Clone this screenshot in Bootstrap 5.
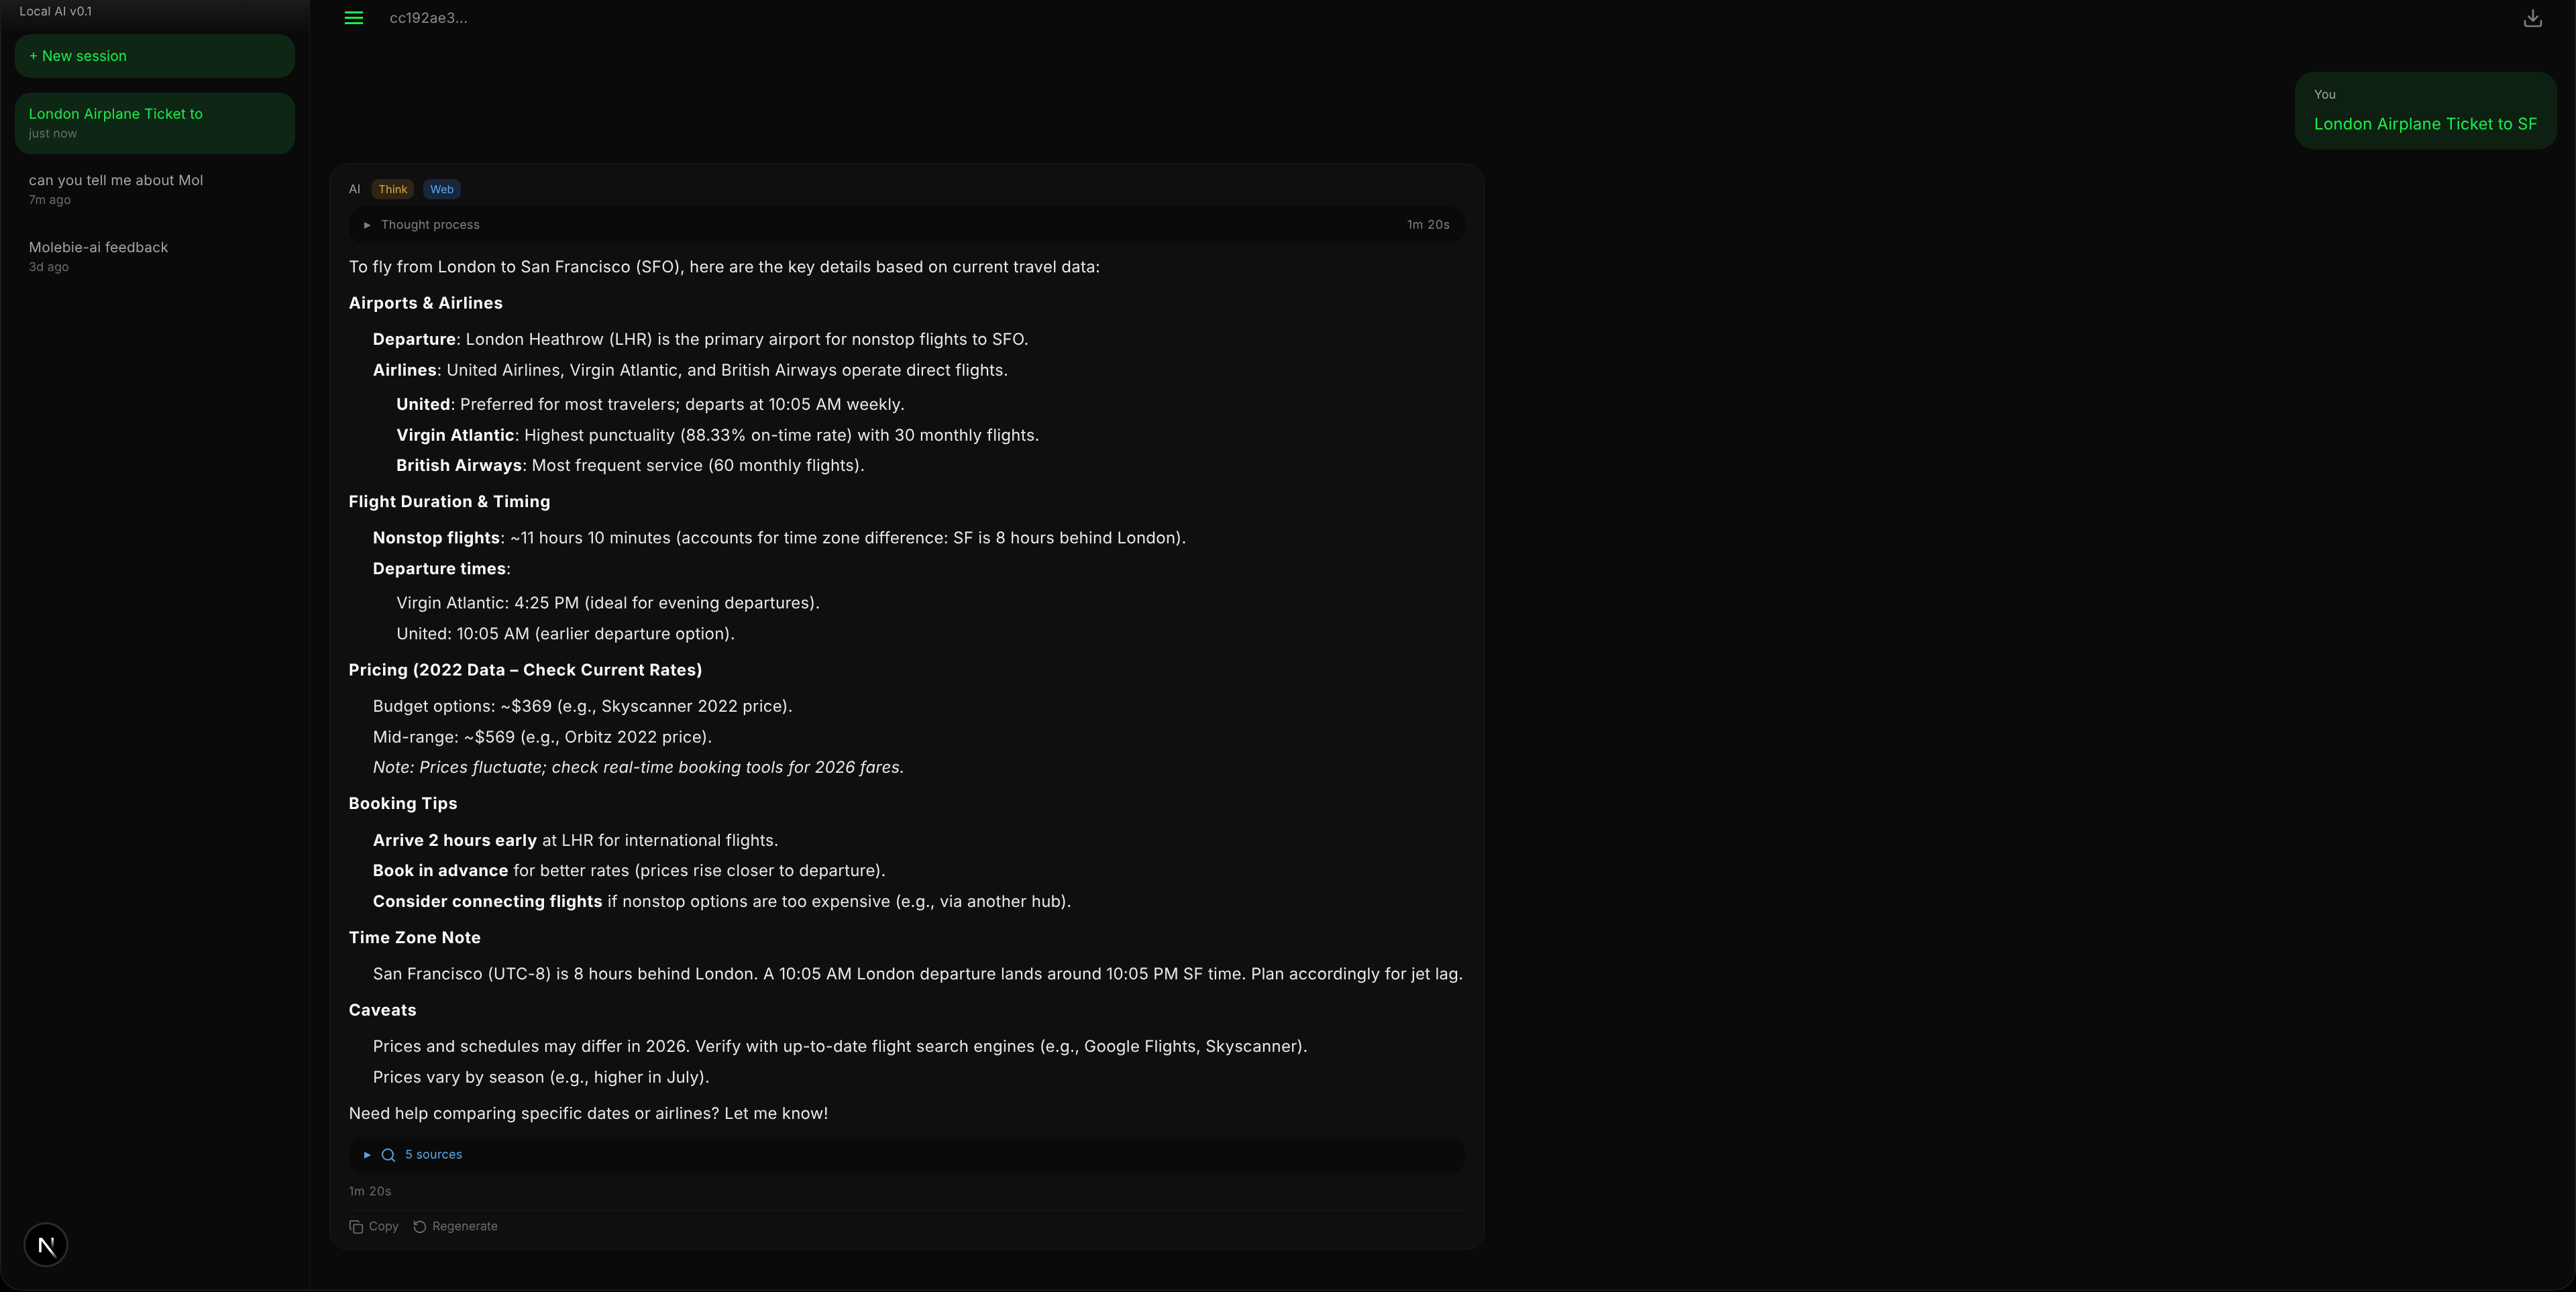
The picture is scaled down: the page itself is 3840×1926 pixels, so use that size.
<!DOCTYPE html>
<html lang="en">
<head>
    <meta charset="UTF-8">
    <meta name="viewport" content="width=device-width, initial-scale=1.0">
    <title>Local AI</title>
    <link href="https://cdn.jsdelivr.net/npm/bootstrap@5.3.0/dist/css/bootstrap.min.css" rel="stylesheet">
    <style>
    html, body { height: 100%; background: #000; }
    body { font-family: Inter, "Liberation Sans", sans-serif; text-rendering: geometricPrecision; overflow: hidden; }

    .app-window {
        height: 1924px;
        background: #0a0a0a;
        border: 2px solid #1a1a1a;
        border-top: 0;
        border-radius: 0 0 32px 32px;
        overflow: hidden;
        will-change: transform; /* grayscale text, same as the reference */
    }

    /* Sidebar */
    .side-panel {
        width: 460px;
        flex: none;
        border-right: 1px solid #1a1a1a;
        background: linear-gradient(#1b1b1b, #0a0a0a 50px);
        padding: 6px 21px 0 20px;
    }
    .app-version { font-size: 18px; line-height: 24px; letter-spacing: .2px; color: #a3a3a3; padding-left: 7px; margin-bottom: 21px; }
    .new-btn {
        height: 65px;
        width: 100%;
        border: 0;
        border-radius: 24px;
        background: #0e2614;
        color: #1aef4c;
        font-size: 21px;
        text-align: left;
        padding: 0 21px;
        margin-bottom: 22px;
    }
    .session-item { padding: 25px 21px 0; height: 99.5px; border-radius: 24px; }
    .session-item.is-active { background: #0e2614; height: 92px; padding-top: 18px; }
    .session-title { font-size: 21px; line-height: 30px; letter-spacing: .2px; color: #a3a3a3; white-space: nowrap; }
    .is-active .session-title { color: #1aef4c; }
    .session-time { font-size: 18px; line-height: 28px; letter-spacing: .15px; color: #6b6b6b; }

    .dev-badge {
        position: absolute;
        left: 33px;
        bottom: 33px;
        width: 67px;
        height: 67px;
        border-radius: 50%;
        background: #000;
        border: 3px solid #2a2a2a;
    }

    /* Top bar */
    .top-bar { height: 53px; padding: 0 46px 0 52px; }
    .menu-lines { width: 27px; height: 19px; border-top: 3px solid #1aef4c; border-bottom: 3px solid #1aef4c; position: relative; margin-right: 40px; }
    .menu-lines::after { content: ""; position: absolute; left: 0; right: 0; top: 5px; height: 3px; background: #1aef4c; }
    .session-id { font-size: 21px; letter-spacing: .4px; color: #8a8a8a; margin-top: 2px; }

    /* Chat */
    .chat-area { padding: 54px 26px 0 29px; }
    .user-bubble {
        background: #0d2012;
        border-radius: 28px;
        padding: 22px 29px 0;
        height: 116px;
        margin-bottom: 21px;
    }
    .bubble-label { font-size: 18px; line-height: 26px; color: #a3a3a3; }
    .bubble-text { font-size: 24px; line-height: 38px; letter-spacing: .2px; color: #1aef4c; margin-top: 11px; }

    .ai-card {
        width: 1722px;
        background: #0f0f0f;
        border: 1px solid #1c1c1c;
        border-radius: 28px;
        padding: 22px 28px 20px 28px;
    }
    .ai-label { font-size: 18px; color: #a3a3a3; margin-right: 17px; }
    .mode-chip { font-size: 16.5px; line-height: 30px; padding: 0 10px; border-radius: 10px; margin-right: 14px; }
    .chip-think { background: #2e2517; color: #e0ab3a; }
    .chip-web { background: #17263b; color: #5aa5ea; }
    .chip-row { margin-bottom: 11px; }
    .fold-bar {
        height: 55px;
        background: #0a0a0a;
        border-radius: 22px;
        padding: 0 22px 0 23px;
        font-size: 18px;
        letter-spacing: .2px;
        color: #808080;
    }
    .fold-arrow { width: 0; height: 0; border-left: 10px solid #808080; border-top: 5px solid transparent; border-bottom: 5px solid transparent; margin-right: 15px; }
    .elapsed { letter-spacing: .7px; }
    .answer-body { font-size: 24px; line-height: 36px; letter-spacing: .27px; color: #e8e8e8; margin-top: 17px; }
    .answer-body p { margin: 0 0 18.1px; }
    .answer-body p:last-child { margin-bottom: 16.7px; }
    .answer-body ul { list-style: none; margin: 0; padding-left: 36px; }
    .answer-body ul ul { padding-left: 35px; }
    .answer-body > ul { margin-bottom: 18.1px; }
    .answer-body li + li { margin-top: 9.7px; }
    .answer-body li > ul { padding-top: 15px; }
    .answer-body b { color: #f8f8f8; font-weight: 700; letter-spacing: .65px; }
    .answer-body .answer-head { color: #f8f8f8; font-weight: 700; letter-spacing: .85px; }
    .sources-bar { color: #5aa5ea; height: 54px; }
    .sources-bar .fold-arrow { border-left-color: #5aa5ea; margin-right: 14px; }
    .search-glyph { margin-right: 13px; }
    .run-time { font-size: 18px; color: #6b6b6b; line-height: 26px; margin-top: 15px; }
    .action-row { border-top: 1px solid #1c1c1c; margin-top: 14px; padding-top: 11px; font-size: 18px; line-height: 26px; color: #6b6b6b; }
    .action-row svg { margin-right: 8px; }
    .action-gap { margin-right: 20px; }
    </style>
</head>
<body>
    <div class="app-window d-flex position-relative">
        <aside class="side-panel">
            <div class="app-version">Local AI v0.1</div>
            <button class="new-btn">+ New session</button>
            <div class="session-item is-active">
                <div class="session-title">London Airplane Ticket to</div>
                <div class="session-time">just now</div>
            </div>
            <div class="session-item">
                <div class="session-title">can you tell me about Mol</div>
                <div class="session-time">7m ago</div>
            </div>
            <div class="session-item">
                <div class="session-title">Molebie-ai feedback</div>
                <div class="session-time">3d ago</div>
            </div>
        </aside>

        <main class="flex-grow-1">
            <div class="top-bar d-flex align-items-center">
                <div class="menu-lines"></div>
                <span class="session-id">cc192ae3...</span>
                <svg class="ms-auto" width="32" height="32" viewBox="0 0 24 24" fill="none" stroke="#808080" stroke-width="2" stroke-linecap="round" stroke-linejoin="round"><path d="M3 15v4a2 2 0 0 0 2 2h14a2 2 0 0 0 2-2v-4"/><path d="M7 10l5 5 5-5"/><path d="M12 15V3"/></svg>
            </div>

            <div class="chat-area">
                <div class="d-flex justify-content-end">
                    <div class="user-bubble">
                        <div class="bubble-label">You</div>
                        <div class="bubble-text">London Airplane Ticket to SF</div>
                    </div>
                </div>

                <div class="ai-card">
                    <div class="d-flex align-items-center chip-row">
                        <span class="ai-label">AI</span>
                        <span class="mode-chip chip-think">Think</span>
                        <span class="mode-chip chip-web">Web</span>
                    </div>
                    <div class="fold-bar d-flex align-items-center">
                        <span class="fold-arrow"></span>
                        <span>Thought process</span>
                        <span class="ms-auto elapsed">1m 20s</span>
                    </div>

                    <div class="answer-body">
                        <p>To fly from London to San Francisco (SFO), here are the key details based on current travel data:</p>
                        <p class="answer-head">Airports &amp; Airlines</p>
                        <ul>
                            <li><b>Departure</b>: London Heathrow (LHR) is the primary airport for nonstop flights to SFO.</li>
                            <li><b>Airlines</b>: United Airlines, Virgin Atlantic, and British Airways operate direct flights.
                                <ul>
                                    <li><b>United</b>: Preferred for most travelers; departs at 10:05 AM weekly.</li>
                                    <li><b>Virgin Atlantic</b>: Highest punctuality (88.33% on-time rate) with 30 monthly flights.</li>
                                    <li><b>British Airways</b>: Most frequent service (60 monthly flights).</li>
                                </ul>
                            </li>
                        </ul>
                        <p class="answer-head">Flight Duration &amp; Timing</p>
                        <ul>
                            <li><b>Nonstop flights</b>: ~11 hours 10 minutes (accounts for time zone difference: SF is 8 hours behind London).</li>
                            <li><b>Departure times</b>:
                                <ul>
                                    <li>Virgin Atlantic: 4:25 PM (ideal for evening departures).</li>
                                    <li>United: 10:05 AM (earlier departure option).</li>
                                </ul>
                            </li>
                        </ul>
                        <p class="answer-head">Pricing (2022 Data – Check Current Rates)</p>
                        <ul>
                            <li>Budget options: ~$369 (e.g., Skyscanner 2022 price).</li>
                            <li>Mid-range: ~$569 (e.g., Orbitz 2022 price).</li>
                            <li><em>Note: Prices fluctuate; check real-time booking tools for 2026 fares.</em></li>
                        </ul>
                        <p class="answer-head">Booking Tips</p>
                        <ul>
                            <li><b>Arrive 2 hours early</b> at LHR for international flights.</li>
                            <li><b>Book in advance</b> for better rates (prices rise closer to departure).</li>
                            <li><b>Consider connecting flights</b> if nonstop options are too expensive (e.g., via another hub).</li>
                        </ul>
                        <p class="answer-head">Time Zone Note</p>
                        <ul>
                            <li>San Francisco (UTC-8) is 8 hours behind London. A 10:05 AM London departure lands around 10:05 PM SF time. Plan accordingly for jet lag.</li>
                        </ul>
                        <p class="answer-head">Caveats</p>
                        <ul>
                            <li>Prices and schedules may differ in 2026. Verify with up-to-date flight search engines (e.g., Google Flights, Skyscanner).</li>
                            <li>Prices vary by season (e.g., higher in July).</li>
                        </ul>
                        <p>Need help comparing specific dates or airlines? Let me know!</p>
                    </div>

                    <div class="fold-bar sources-bar d-flex align-items-center">
                        <span class="fold-arrow"></span>
                        <svg class="search-glyph" width="24" height="24" viewBox="0 0 24 24" fill="none" stroke="#5aa5ea" stroke-width="2" stroke-linecap="round"><circle cx="11" cy="11" r="8"/><path d="M21 21l-4.300-4.300"/></svg>
                        <span>5 sources</span>
                    </div>
                    <div class="run-time elapsed">1m 20s</div>
                    <div class="action-row d-flex align-items-center">
                        <svg width="22" height="22" viewBox="0 0 24 24" fill="none" stroke="#6b6b6b" stroke-width="2" stroke-linecap="round" stroke-linejoin="round"><rect x="8" y="8" width="14" height="14" rx="2"/><path d="M4 16c-1.100 0-2-.9-2-2V4c0-1.100.9-2 2-2h10c1.100 0 2 .9 2 2"/></svg>
                        <span class="action-gap">Copy</span>
                        <svg width="22" height="22" viewBox="0 0 24 24" fill="none" stroke="#6b6b6b" stroke-width="2" stroke-linecap="round" stroke-linejoin="round"><path d="M3 12a9 9 0 1 0 9-9 9.750 9.750 0 0 0-6.740 2.740L3 8"/><path d="M3 3v5h5"/></svg>
                        <span>Regenerate</span>
                    </div>
                </div>
            </div>
        </main>

        <div class="dev-badge d-flex align-items-center justify-content-center">
            <svg width="54" height="54" viewBox="0 0 180 180" fill="none">
                <defs>
                    <linearGradient id="nA" x1="109" y1="116.500" x2="144.500" y2="160.500" gradientUnits="userSpaceOnUse"><stop stop-color="#fff"/><stop offset="1" stop-color="#fff" stop-opacity="0"/></linearGradient>
                    <linearGradient id="nB" x1="121" y1="54" x2="120.800" y2="106.900" gradientUnits="userSpaceOnUse"><stop stop-color="#fff"/><stop offset="1" stop-color="#fff" stop-opacity="0"/></linearGradient>
                </defs>
                <path d="M149.508 157.520L69.142 54H54V125.970H66.114V69.384L139.999 164.845C143.333 162.614 146.509 160.165 149.508 157.520Z" fill="url(#nA)"/>
                <rect x="115" y="54" width="12" height="72" fill="url(#nB)"/>
            </svg>
        </div>
    </div>
</body>
</html>
